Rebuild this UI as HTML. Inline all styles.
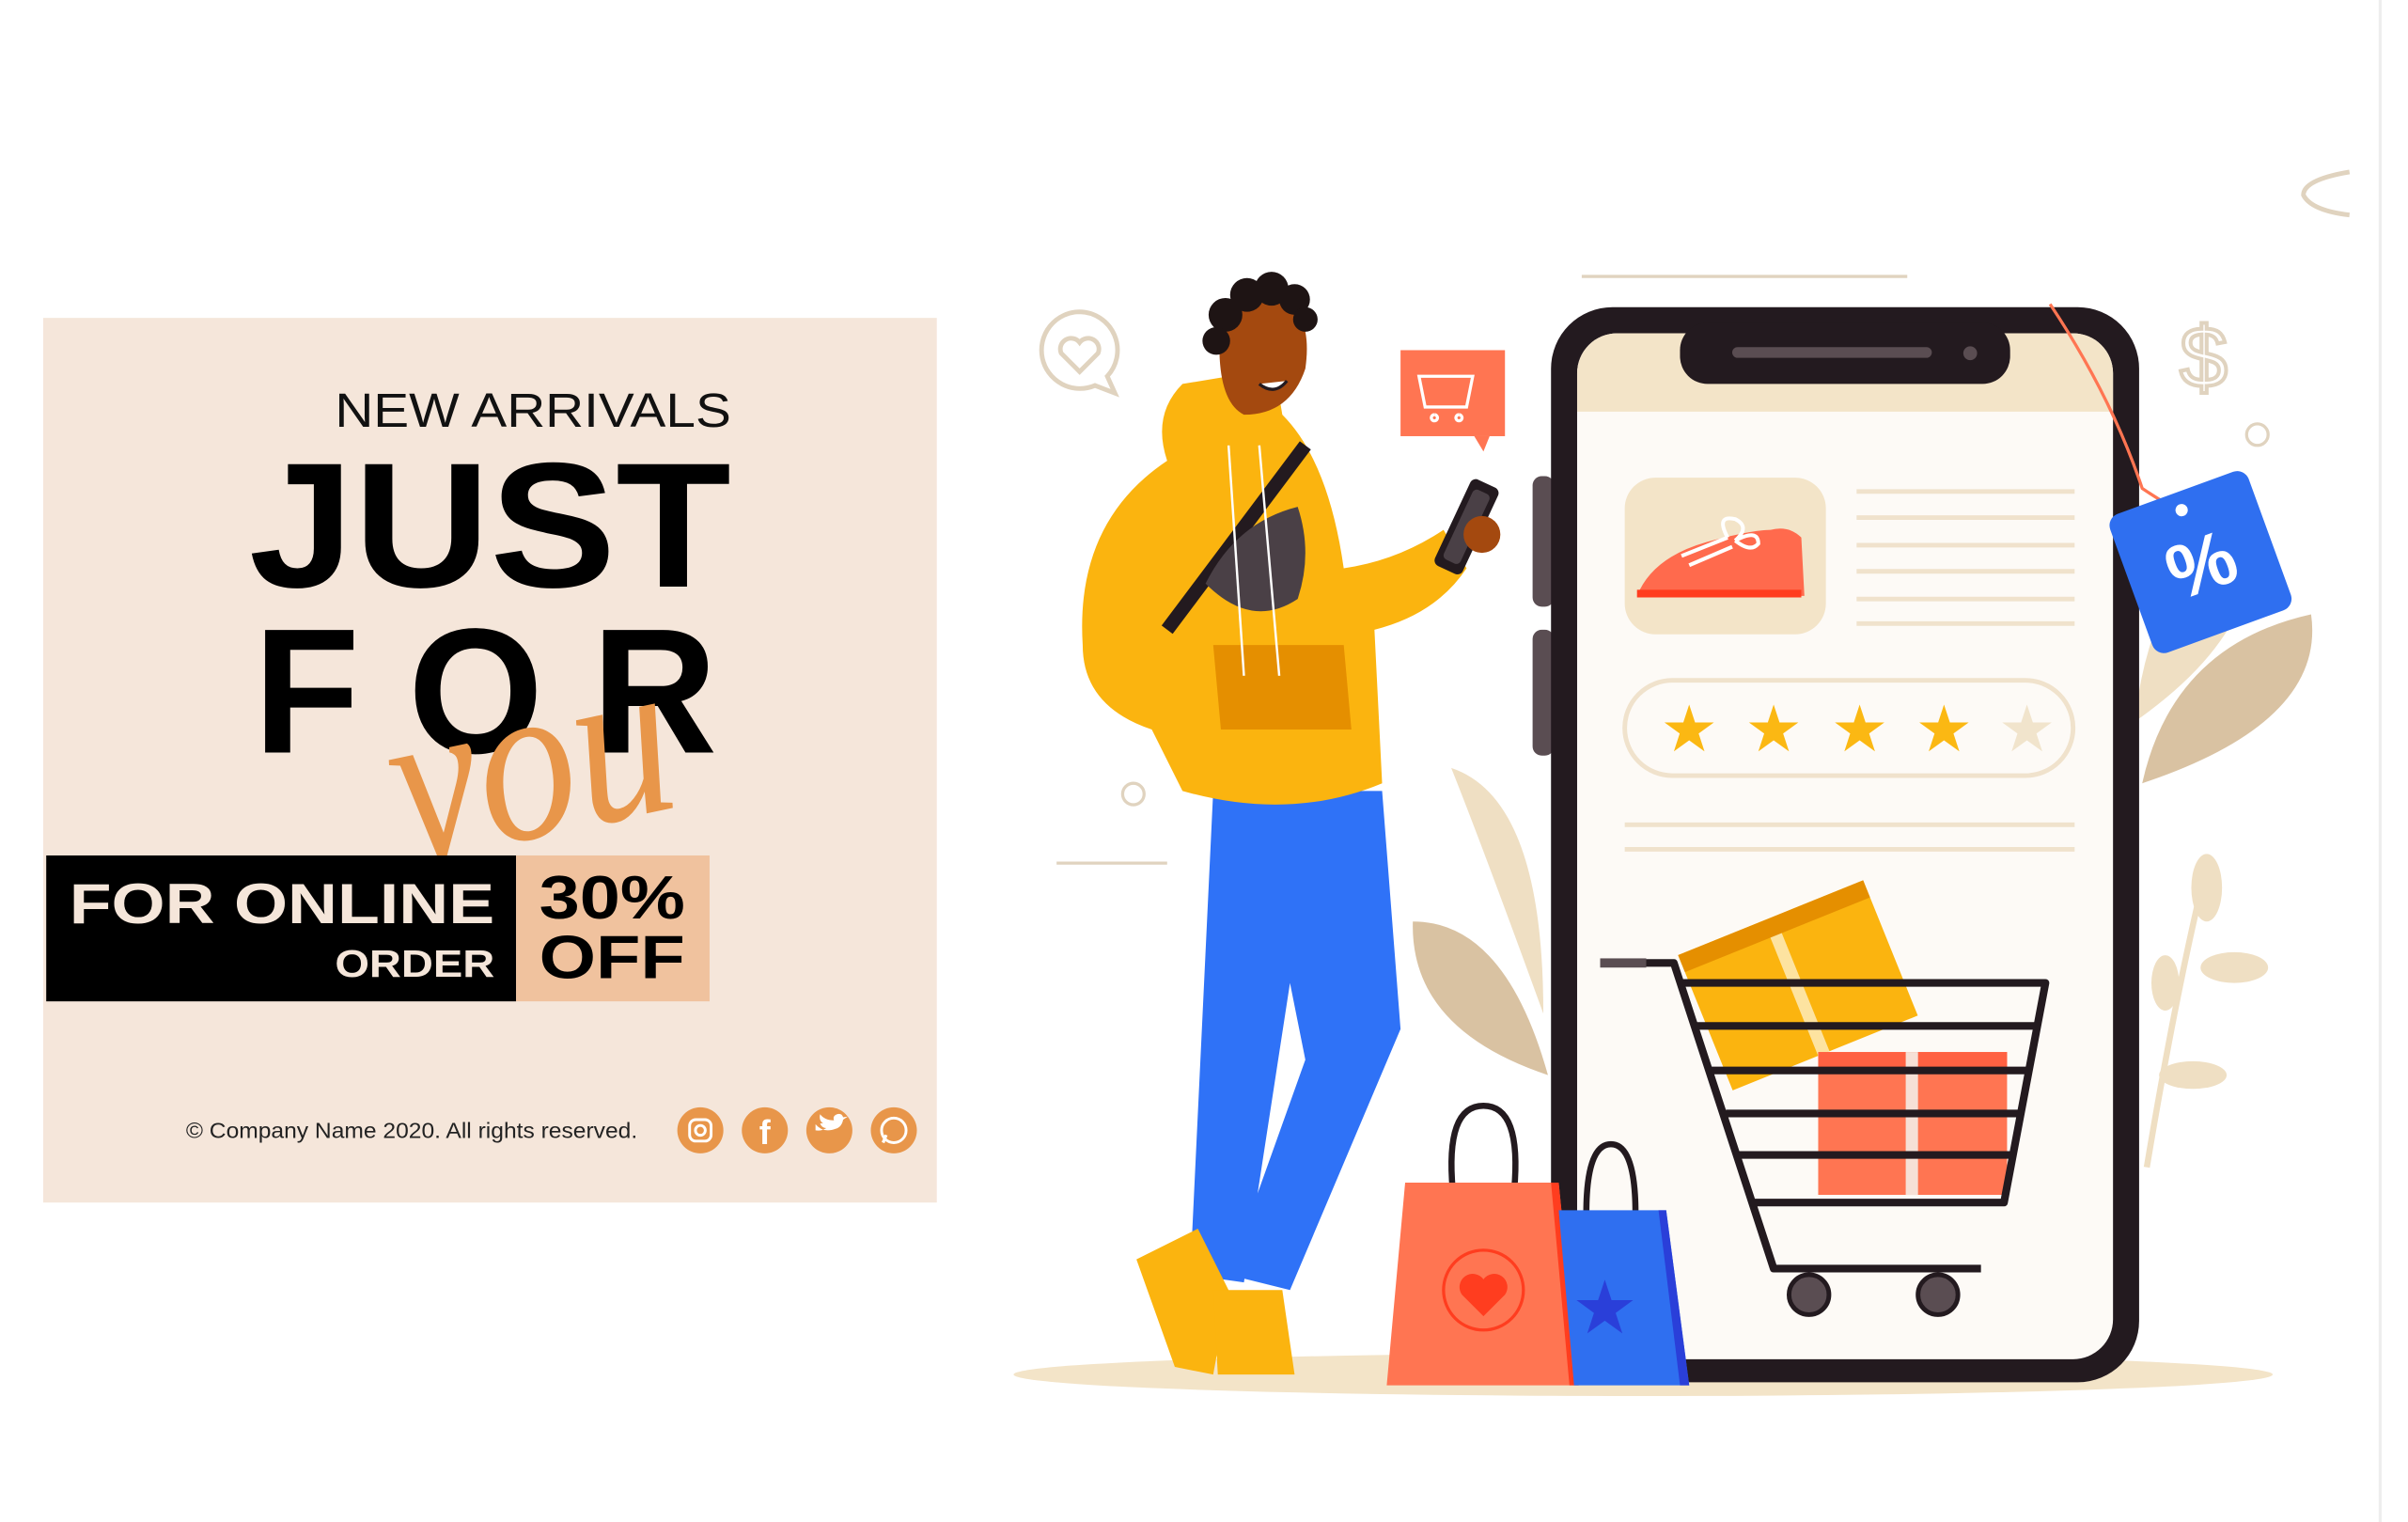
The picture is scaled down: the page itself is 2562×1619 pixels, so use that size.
<!DOCTYPE html>
<html><head><meta charset="utf-8"><style>
html,body{margin:0;padding:0;background:#fff;width:2562px;height:1619px;overflow:hidden}
svg{display:block}
</style></head><body>
<svg width="2562" height="1619" viewBox="0 0 1568 991" xmlns="http://www.w3.org/2000/svg" font-family="Liberation Sans, sans-serif">
<rect width="1568" height="991" fill="#fff"/>
<!-- left panel -->
<rect x="28" y="207" width="582" height="576" fill="#f5e6da"/>
<text x="218" y="278" font-size="31" fill="#111" textLength="258" lengthAdjust="spacingAndGlyphs">NEW ARRIVALS</text>
<text x="162" y="382" font-size="116" font-weight="bold" fill="#000" textLength="314" lengthAdjust="spacingAndGlyphs">JUST</text>
<text x="165" y="490" font-size="116" font-weight="bold" fill="#000" textLength="302" lengthAdjust="spacingAndGlyphs">F O R</text>
<text x="255" y="545" font-size="150" font-style="italic" font-family="Liberation Serif, serif" fill="#e8964a" transform="rotate(-12 345 510)" textLength="185" lengthAdjust="spacingAndGlyphs">you</text>
<rect x="30" y="557" width="306" height="95" fill="#000"/>
<rect x="336" y="557" width="126" height="95" fill="#f0c29e"/>
<text x="45" y="601" font-size="37" font-weight="bold" fill="#f5e6da" textLength="277" lengthAdjust="spacingAndGlyphs">FOR ONLINE</text>
<text x="218" y="636" font-size="25" font-weight="bold" fill="#f5e6da" textLength="104" lengthAdjust="spacingAndGlyphs">ORDER</text>
<text x="351" y="598" font-size="40" font-weight="bold" fill="#000" textLength="95" lengthAdjust="spacingAndGlyphs">30%</text>
<text x="351" y="637" font-size="40" font-weight="bold" fill="#000" textLength="95" lengthAdjust="spacingAndGlyphs">OFF</text>
<text x="121" y="741" font-size="14" fill="#222" textLength="294" lengthAdjust="spacingAndGlyphs">© Company Name 2020. All rights reserved.</text>
<g fill="#e8964a"><circle cx="456" cy="736" r="15"/><circle cx="498" cy="736" r="15"/><circle cx="540" cy="736" r="15"/><circle cx="582" cy="736" r="15"/></g>
<rect x="449" y="729" width="14" height="14" rx="4" fill="none" stroke="#fff" stroke-width="1.8"/><circle cx="456" cy="736" r="3.2" fill="none" stroke="#fff" stroke-width="1.8"/>
<text x="498" y="745" font-size="22" font-weight="bold" fill="#fff" text-anchor="middle">f</text>
<path d="M531 732 q5 6 13 3 q4-1 5-6 l3-2-3 .5 q-1-3-4-2 q-3 1-2 4 q-6 0-9-4 q-1 4 2 6 l-2 0 q1 3 4 3 q-3 2-7 1.5z" fill="#fff"/>
<circle cx="582" cy="736" r="8" fill="none" stroke="#fff" stroke-width="1.8"/><path d="M575 744 l2-5" stroke="#fff" stroke-width="2"/>
<!-- illustration decorations -->
<line x1="1030" y1="180" x2="1242" y2="180" stroke="#e0d3bf" stroke-width="2"/>
<line x1="688" y1="562" x2="760" y2="562" stroke="#e0d3bf" stroke-width="2"/>
<circle cx="738" cy="517" r="7" fill="none" stroke="#e0d3bf" stroke-width="2"/>
<circle cx="1470" cy="283" r="7" fill="none" stroke="#e0d3bf" stroke-width="2"/>
<path d="M703 203 a25 25 0 1 0 10 48 l13 5 -5-11 a25 25 0 0 0 -18-42z" fill="none" stroke="#e0d3bf" stroke-width="3"/>
<path d="M703 242 l-12-12 a7 7 0 0 1 12-7 a7 7 0 0 1 12 7z" fill="none" stroke="#e0d3bf" stroke-width="3"/>
<text x="1435" y="252" font-size="56" fill="none" stroke="#e0d3bf" stroke-width="2.5" text-anchor="middle">$</text>
<path d="M1530 112 q-30 5-30 15 q5 10 30 13" fill="none" stroke="#e0d3bf" stroke-width="3"/>
<!-- leaves -->
<path d="M1395 510 q20-90 110-110 q10 70-110 110z" fill="#d9c2a2"/>
<path d="M1390 470 q10-90 70-150 q30 80-70 150z" fill="#efdfc3"/>
<path d="M1005 660 q-40-110-60-160 q60 20 60 160z" fill="#efdfc3"/>
<path d="M1008 700 q-90-30-88-100 q60 0 88 100z" fill="#d9c2a2"/>
<path d="M1398 760 q20-120 40-200" stroke="#efdfc3" stroke-width="4" fill="none"/>
<g fill="#efdfc3"><ellipse cx="1437" cy="578" rx="10" ry="22"/><ellipse cx="1455" cy="630" rx="22" ry="10"/><ellipse cx="1428" cy="700" rx="22" ry="9"/><ellipse cx="1410" cy="640" rx="9" ry="18"/></g>
<!-- floor -->
<ellipse cx="1070" cy="895" rx="410" ry="14" fill="#f3e4c8"/>
<!-- phone -->
<rect x="998" y="310" width="14" height="85" rx="6" fill="#5a4d52"/>
<rect x="998" y="410" width="14" height="82" rx="6" fill="#5a4d52"/>
<rect x="1010" y="200" width="383" height="700" rx="40" fill="#231a1f"/>
<rect x="1027" y="217" width="349" height="668" rx="26" fill="#fdfaf6"/>
<path d="M1027 268 V243 a26 26 0 0 1 26-26 H1350 a26 26 0 0 1 26 26 V268z" fill="#f3e4c8"/>
<rect x="1094" y="210" width="215" height="40" rx="18" fill="#231a1f"/>
<rect x="1128" y="226" width="130" height="7" rx="3.5" fill="#5a4d52"/><circle cx="1283" cy="230" r="4.5" fill="#5a4d52"/>
<rect x="1058" y="311" width="131" height="102" rx="20" fill="#f3e4c8"/>
<path d="M1066 388 q10-25 45-35 q30-8 42-8 q12-3 20 5 l2 38z" fill="#ff6a4d"/>
<rect x="1066" y="384" width="107" height="5" fill="#ff3d1f"/>
<path d="M1095 362 l30-12 M1100 368 l28-12 M1125 350 q-8-15 5-12 q10 5 0 14 q15-8 15 2 q-5 6-15-2" stroke="#fff" stroke-width="2.5" fill="none"/>
<g stroke="#f0e2cc" stroke-width="3"><line x1="1209" y1="320" x2="1351" y2="320"/><line x1="1209" y1="337" x2="1351" y2="337"/><line x1="1209" y1="355" x2="1351" y2="355"/><line x1="1209" y1="372" x2="1351" y2="372"/><line x1="1209" y1="390" x2="1351" y2="390"/><line x1="1209" y1="406" x2="1351" y2="406"/><line x1="1058" y1="537" x2="1351" y2="537"/><line x1="1058" y1="553" x2="1351" y2="553"/></g>
<rect x="1058" y="443" width="292" height="62" rx="31" fill="none" stroke="#f0e2cc" stroke-width="3"/>
<g font-size="42" text-anchor="middle" fill="#fbb813"><text x="1100" y="489">★</text><text x="1155" y="489">★</text><text x="1211" y="489">★</text><text x="1266" y="489">★</text><text x="1320" y="489" fill="#f1e4cc">★</text></g>
<!-- boxes -->
<g transform="rotate(-22 1168 640)"><rect x="1105" y="595" width="130" height="95" fill="#fbb40f"/><rect x="1165" y="595" width="8" height="95" fill="#fde3a0"/><rect x="1105" y="595" width="130" height="12" fill="#e58f00"/></g>
<rect x="1184" y="685" width="123" height="93" fill="#ff7552"/><rect x="1184" y="685" width="123" height="14" fill="#ff6142"/><rect x="1241" y="685" width="8" height="93" fill="#f6e0d6"/>
<!-- cart -->
<g stroke="#231a1f" stroke-width="5" fill="none" stroke-linejoin="round"><path d="M1042 627 H1090 L1155 826 H1290"/><path d="M1096 640 H1332 L1305 783 H1140"/><line x1="1104" y1="668" x2="1327" y2="668"/><line x1="1114" y1="697" x2="1321" y2="697"/><line x1="1124" y1="725" x2="1316" y2="725"/><line x1="1132" y1="752" x2="1311" y2="752"/></g>
<rect x="1042" y="624" width="30" height="6" fill="#5a4d52"/>
<circle cx="1178" cy="843" r="13" fill="#5a4d52" stroke="#231a1f" stroke-width="3"/><circle cx="1262" cy="843" r="13" fill="#5a4d52" stroke="#231a1f" stroke-width="3"/>
<!-- bags -->
<path d="M946 775 q-5-55 20-55 q25 0 20 55" fill="none" stroke="#231a1f" stroke-width="4"/>
<path d="M915 770 H1015 L1028 902 H903z" fill="#ff7552"/><path d="M1015 770 L1028 902 H1022 L1010 770z" fill="#ff3d1f"/>
<circle cx="966" cy="840" r="26" fill="none" stroke="#ff3d1f" stroke-width="2"/><path d="M966 857 l-14-14 a8 8 0 0 1 14-10 a8 8 0 0 1 14 10z" fill="#ff3d1f"/>
<path d="M1033 790 q0-45 16-45 q16 0 16 45" fill="none" stroke="#231a1f" stroke-width="4"/>
<path d="M1015 788 H1085 L1100 902 H1025z" fill="#2f6ff0"/><path d="M1085 788 L1100 902 H1094 L1080 788z" fill="#2a3fd9"/>
<text x="1045" y="868" font-size="48" text-anchor="middle" fill="#2a3fd9">★</text>
<!-- tag -->
<path d="M1335 198 q40 60 60 120 q15 10 25 15" fill="none" stroke="#ff7552" stroke-width="2"/>
<g transform="rotate(-20 1433 366)"><rect x="1385" y="318" width="96" height="96" rx="8" fill="#2f6ff0"/><text x="1433" y="385" font-size="50" font-weight="bold" fill="#fff" text-anchor="middle">%</text><circle cx="1433" cy="330" r="4" fill="#fff"/></g>
<!-- speech cart -->
<rect x="912" y="228" width="68" height="56" fill="#ff7552"/><path d="M960 284 l6 10 4-10z" fill="#ff7552"/>
<path d="M924 245 h35 l-4 20 h-27z M934 270 a2 2 0 1 0 .1 0 M950 270 a2 2 0 1 0 .1 0" fill="none" stroke="#fff" stroke-width="2"/>
<!-- person -->
<path d="M790 515 L775 830 L810 835 L840 640 L850 690 L800 830 L840 840 L912 670 L900 515z" fill="#2f72f7"/>
<path d="M740 820 l40-20 20 40 -10 55 -25 -5z" fill="#fbb40f"/>
<path d="M790 840 l45 0 8 55 -50 0z" fill="#fbb40f"/>
<path d="M770 250 q-20 20-10 50 q-60 40-55 120 q0 40 45 55 l20 40 q70 20 130 -5 l-5-100 q40-10 60-40 l-15-25 q-30 20-65 25 q-10-70-40-100 l-5-30z" fill="#fbb40f"/>
<path d="M790 420 h85 l5 55 h-85z" fill="#e58f00"/>
<path d="M760 410 l90-120" stroke="#231a1f" stroke-width="9"/>
<path d="M785 380 q20-40 60-50 q10 30 0 60 q-30 20-60 -10z" fill="#4a4046"/>
<line x1="800" y1="290" x2="810" y2="440" stroke="#fff" stroke-width="1.5"/><line x1="820" y1="290" x2="833" y2="440" stroke="#fff" stroke-width="1.5"/>
<path d="M795 205 q15-15 40-10 q20 10 15 45 q-10 30-40 30 q-20-10-15-65z" fill="#a4490f"/>
<g fill="#1e1414"><circle cx="798" cy="205" r="11"/><circle cx="812" cy="192" r="11"/><circle cx="828" cy="188" r="11"/><circle cx="843" cy="195" r="10"/><circle cx="850" cy="208" r="8"/><circle cx="792" cy="222" r="9"/></g>
<path d="M820 250 q10 8 18 -2" fill="#fff" stroke="#231a1f" stroke-width="2"/>
<rect x="945" y="312" width="20" height="62" rx="4" fill="#231a1f" transform="rotate(25 955 343)"/>
<rect x="949" y="318" width="12" height="50" rx="3" fill="#4a4046" transform="rotate(25 955 343)"/>
<circle cx="965" cy="348" r="12" fill="#a4490f"/>
<path d="M1550 0 V991" stroke="#eee" stroke-width="2"/>
</svg>
</body></html>
